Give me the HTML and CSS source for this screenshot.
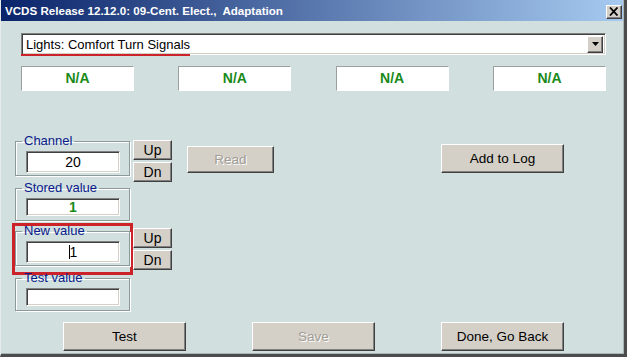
FILE: index.html
```html
<!DOCTYPE html>
<html lang="en">
  <head>
    <meta charset="utf-8">
    <title>VCDS Adaptation</title>
    <link rel="stylesheet" href="styles.css">
  </head>
  <body>
    <div class="window">
      <div class="titlebar">
        <span class="title">VCDS Release 12.12.0: 09-Cent. Elect.,&nbsp; Adaptation</span>
        <span class="close">
          <svg width="10" height="9" viewBox="0 0 10 9"><path d="M1 0.5 L8.5 8.5 M8.5 0.5 L1 8.5" stroke="#000" stroke-width="1.8" fill="none"/></svg>
        </span>
      </div>

      <div class="client">
        <div class="combo">
          <span class="combo-text">Lights: Comfort Turn Signals</span>
          <span class="combo-btn">
            <svg width="7" height="4" viewBox="0 0 7 4"><path d="M0 0 H7 L3.5 4 Z" fill="#000"/></svg>
          </span>
        </div>

        <div class="readouts">
          <div class="readout">N/A</div>
          <div class="readout">N/A</div>
          <div class="readout">N/A</div>
          <div class="readout">N/A</div>
        </div>

        <div class="row row-channel">
          <fieldset class="group">
            <legend>Channel</legend>
            <div class="field tall">20</div>
          </fieldset>
          <div class="updown">
            <button class="btn small">Up</button>
            <button class="btn small">Dn</button>
          </div>
          <button class="btn read" disabled>Read</button>
          <button class="btn add">Add to Log</button>
        </div>

        <div class="row row-stored">
          <fieldset class="group">
            <legend>Stored value</legend>
            <div class="field short green">1</div>
          </fieldset>
        </div>

        <div class="row row-new">
          <div class="highlight">
            <fieldset class="group">
              <legend>New value</legend>
              <div class="field tall"><span class="caret"></span>1</div>
            </fieldset>
          </div>
          <div class="updown">
            <button class="btn small">Up</button>
            <button class="btn small">Dn</button>
          </div>
        </div>

        <div class="row row-test">
          <fieldset class="group">
            <legend>Test value</legend>
            <div class="field short"></div>
          </fieldset>
        </div>

        <div class="row row-actions">
          <button class="btn action">Test</button>
          <button class="btn action save" disabled>Save</button>
          <button class="btn action done">Done, Go Back</button>
        </div>
      </div>
    </div>
  </body>
</html>
```

FILE: styles.css
```css
:root {
  font-family: "Liberation Sans", Arial, sans-serif;
  font-size: 14px;
}

body {
  margin: 0;
  padding: 0;
  background: #d1dfdf;
}

.window {
  box-sizing: border-box;
  width: 627px;
  height: 357px;
  background: #d1dfdf;
  border-left: 1px solid #e6ecec;
  border-right: 3px solid #4c4c4c;
  border-bottom: 3px solid #4c4c4c;
  box-shadow: inset -1px -1px #a9b4b4;
  overflow: hidden;
}

.titlebar {
  display: flex;
  align-items: center;
  justify-content: space-between;
  height: 21px;
  padding: 0 1px 0 4px;
  margin-right: 1px;
  background: linear-gradient(to right, #0a246a, #a6caf0);
  color: #fff;
}
.title {
  font-weight: bold;
  font-size: 11.6px;
  white-space: pre;
}
.close {
  display: flex;
  align-items: center;
  justify-content: center;
  box-sizing: border-box;
  width: 16px;
  height: 14px;
  margin-top: 2px;
  background: #d4d0c8;
  border: 1px solid;
  border-color: #fff #404040 #404040 #fff;
  box-shadow: inset -1px -1px #808080;
}

.combo {
  position: relative;
  display: flex;
  align-items: center;
  justify-content: space-between;
  box-sizing: border-box;
  width: 585px;
  height: 22px;
  margin: 12px 0 0 20px;
  background: #fff;
  border: 1px solid;
  border-color: #808080 #fff #fff #808080;
  box-shadow: inset 1px 1px #404040, inset -1px -1px #d4d0c8;
  padding: 2px 2px 2px 4px;
}
.combo::after {
  content: "";
  position: absolute;
  left: -1px;
  bottom: -2px;
  width: 169px;
  height: 2px;
  background: #cc2229;
}
.combo-text {
  font-size: 13px;
  color: #000;
}
.combo-btn {
  display: flex;
  align-items: center;
  justify-content: center;
  box-sizing: border-box;
  width: 16px;
  height: 17px;
  background: #d4d0c8;
  border: 1px solid;
  border-color: #fff #404040 #404040 #fff;
  box-shadow: inset -1px -1px #808080;
}

.readouts {
  display: flex;
  justify-content: space-between;
  width: 585px;
  margin: 11px 0 0 20px;
}
.readout {
  box-sizing: border-box;
  width: 113px;
  height: 25px;
  background: #fff;
  border: 1px solid;
  border-color: #9aa0a0 #fff #fff #9aa0a0;
  color: #1a8a1a;
  font-weight: bold;
  font-size: 14px;
  line-height: 23px;
  text-align: center;
}

.row {
  display: flex;
  align-items: flex-start;
}
.row-channel {
  margin-top: 43px;
}
.row-stored {
  margin-top: -1px;
}
.row-new {
  margin-top: 2px;
}
.row-test {
  margin-top: -4px;
}
.row-actions {
  margin-top: 11px;
}

.group {
  box-sizing: border-box;
  width: 115px;
  margin: 0 0 0 14px;
  padding: 0 0 0 10px;
  min-width: 0;
  border: 1px solid #8e9a9a;
  box-shadow: inset 1px 1px #fff, 1px 1px #fff;
}
.group legend {
  padding: 0 2px;
  margin-left: -4px;
  font-size: 13px;
  line-height: 14px;
  color: #0a1a8a;
}
.row-channel .group,
.row-new .group {
  padding-top: 3px;
  padding-bottom: 2px;
}
.row-stored .group,
.row-test .group {
  padding-top: 3px;
  padding-bottom: 4px;
}

.field {
  box-sizing: border-box;
  width: 94px;
  background: #fff;
  border: 1px solid;
  border-color: #808080 #fff #fff #808080;
  box-shadow: inset 1px 1px #404040, inset -1px -1px #d4d0c8;
  text-align: center;
  font-size: 14px;
  color: #000;
}
.field.tall {
  height: 22px;
  line-height: 20px;
}
.field.short {
  height: 18px;
  line-height: 16px;
}
.field.green {
  color: #1a8a1a;
  font-weight: bold;
}
.caret {
  display: inline-block;
  width: 1px;
  height: 14px;
  background: #000;
  vertical-align: -2px;
}

.highlight {
  box-sizing: border-box;
  width: 121px;
  margin-left: 11px;
  padding: 0 1px 6px 0;
  border: 3px solid #cc2229;
}
.highlight .group {
  margin: -2px 0 0 0;
}

.btn {
  box-sizing: border-box;
  padding: 0;
  background: #d4d0c8;
  border: 1px solid;
  border-color: #fff #404040 #404040 #fff;
  box-shadow: inset -1px -1px #808080;
  font-family: inherit;
  font-size: 13.5px;
  color: #000;
}
.btn:disabled {
  color: #a19d96;
  text-shadow: 1px 1px #fff;
}

.updown {
  display: flex;
  flex-direction: column;
  gap: 2px;
  margin: 6px 0 0 3px;
}
.row-new .updown {
  margin: 5px 0 0 0;
}
.btn.small {
  width: 39px;
  height: 20px;
  line-height: 18px;
  font-size: 14px;
}
.btn.read {
  width: 87px;
  height: 27px;
  margin: 12px 0 0 15px;
}
.btn.add {
  width: 123px;
  height: 29px;
  margin: 10px 0 0 167px;
}

.btn.action {
  width: 123px;
  height: 29px;
}
.row-actions .btn:first-child {
  margin-left: 62px;
}
.btn.save {
  margin-left: 66px;
}
.btn.done {
  margin-left: 66px;
}
```
